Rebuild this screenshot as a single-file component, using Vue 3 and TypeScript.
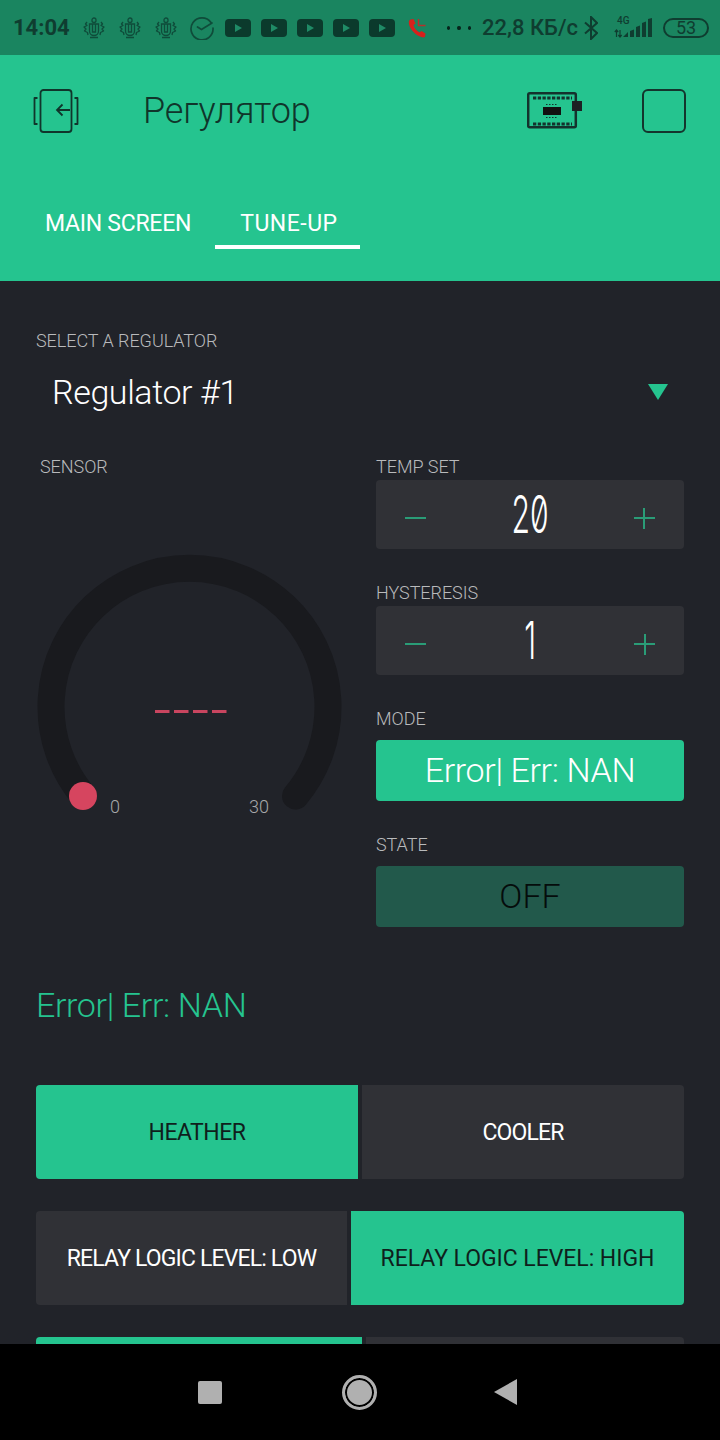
<script setup lang="ts">
const wreaths = [0, 1, 2];
const players = [0, 1, 2, 3, 4];
const steppers = [
  { label: "TEMP SET", value: "20" },
  { label: "HYSTERESIS", value: "1" },
];
const segments = [
  { left: "HEATHER", right: "COOLER", leftOn: true, leftWidth: 322, wide: false },
  { left: "RELAY LOGIC LEVEL: LOW", right: "RELAY LOGIC LEVEL: HIGH", leftOn: false, leftWidth: 311, wide: true },
];
</script>

<template>
  <div class="phone">
    <div class="statusbar">
      <span class="clock">14:04</span>
      <svg v-for="w in wreaths" :key="w" class="wreath" viewBox="0 0 24 24" fill="none" stroke="#0f4c3a" stroke-width="1.300">
        <rect x="10" y="2" width="4" height="4.500" rx="2" />
        <path d="M7.500 8h9v7a4.500 4.500 0 0 1-9 0z" />
        <path d="M10.500 8v8h3V8" />
        <path d="M5 6L3.500 8 5 9.500 2 11l2 2-1.500 2 3 1.500L6 19M19 6l1.500 2L19 9.500l3 1.500-2 2 1.500 2-3 1.500L18 19M8 21.500h8" stroke-linejoin="round" />
      </svg>
      <svg class="sber" viewBox="0 0 24 24" fill="none" stroke="#0f4c3a" stroke-width="1.700">
        <path d="M21 6.500A11 11 0 1 0 23 12" stroke-linecap="round" />
        <path d="M7.500 11l4 2.500L22 7" stroke-linecap="round" />
      </svg>
      <svg v-for="p in players" :key="p" class="player" viewBox="0 0 26 18">
        <rect width="26" height="18" rx="4" fill="#0b3a2c" />
        <path d="M10 5l7 4-7 4z" fill="#1f8b66" />
      </svg>
      <svg class="missed" viewBox="0 0 20 20">
        <path d="M2.500 1.500l3-.5 2 4.500-2 1.500c.6 3 3 6 6 7.500l2-1.500 4 2.500-.5 3c-.3 1-1.500 1-3 .8C7 17.500 1 10 .8 4.500c0-1.500.6-2.600 1.700-3z" fill="#d8201c" />
        <path d="M10.500 1v6.500h7" fill="none" stroke="#b8302a" stroke-width="1.500" />
      </svg>
      <span class="dots"><i></i><i></i><i></i></span>
      <span class="speed">22,8 КБ/с</span>
      <svg class="bt" viewBox="0 0 14 24" fill="none" stroke="#0f3d30" stroke-width="2">
        <path d="M1 6.500l12 10.500-6 6V1l6 6L1 17.500" />
      </svg>
      <svg class="signal" viewBox="0 0 38 24">
        <text x="3" y="8" font-size="10" font-family="Roboto, sans-serif" fill="#0f3d30">4G</text>
        <path d="M2.500 21v-7M.8 16l1.700-2 1.700 2M6 14v7M4.300 19L6 21l1.700-2" fill="none" stroke="#0f3d30" stroke-width="1.200" />
        <path d="M9 21l5-5v5zM16 15l4-1.500V21h-4zM22 11l4-1.500V21h-4zM28 7l4-1.500V21h-4zM34 3l4-1v19h-4z" fill="#0f3d30" />
      </svg>
      <span class="battery">53</span>
    </div>

    <header class="appbar">
      <div class="toolbar">
        <svg class="back" viewBox="0 0 46 44" fill="none" stroke="#10352b" stroke-width="1.800">
          <rect x="7.500" y="1" width="31" height="42" rx="3" />
          <path d="M4.500 9H1.500v26h3M41.500 9h3v26h-3" stroke-linejoin="round" />
          <path d="M37 21H24M29.500 15.500L24 21l5.500 5.500" />
        </svg>
        <h1 class="title">Регулятор</h1>
        <svg class="board" viewBox="0 0 56 42">
          <rect x="1.200" y="3.200" width="47.600" height="34" rx="1.500" fill="none" stroke="#14322d" stroke-width="2.500" />
          <path d="M6 8h39M6 34h39" stroke="#14322d" stroke-width="3" stroke-dasharray="3.300 1.450" fill="none" />
          <rect x="16" y="17" width="18" height="8" fill="#111" />
          <path d="M19 14.500h12M19 27.500h12" stroke="#14322d" stroke-width="1" stroke-dasharray="1.500 1.500" />
          <rect x="45" y="11" width="10" height="10" fill="#1d2024" />
        </svg>
        <span class="square"></span>
      </div>
      <nav class="tabs">
        <span class="tab">MAIN SCREEN</span>
        <span class="tab active">TUNE-UP</span>
      </nav>
    </header>

    <main class="content">
      <div class="label">SELECT A REGULATOR</div>
      <div class="select">
        <span>Regulator #1</span>
        <i class="caret"></i>
      </div>

      <div class="columns">
        <div class="sensor">
          <div class="label sensor-label">SENSOR</div>
          <div class="gauge">
            <svg width="340" height="400" viewBox="36 457 340 400">
              <path d="M83.500 796A138.500 138.500 0 1 1 295.500 796" fill="none" stroke="#191a1e" stroke-width="27" stroke-linecap="round" />
              <circle cx="83" cy="796" r="14" fill="#d6455f" />
              <path d="M155 711.500h72" stroke="#c9455f" stroke-width="3" stroke-dasharray="14.500 4.500" />
            </svg>
            <span class="tick tick-min">0</span>
            <span class="tick tick-max">30</span>
          </div>
        </div>

        <div class="controls">
          <div v-for="s in steppers" :key="s.label" class="field">
            <div class="label">{{ s.label }}</div>
            <div class="stepper">
              <i class="minus"></i>
              <span class="value">{{ s.value }}</span>
              <i class="plus"></i>
            </div>
          </div>
          <div class="field">
            <div class="label label-btn">MODE</div>
            <div class="button on">Error| Err: NAN</div>
          </div>
          <div class="field">
            <div class="label label-btn">STATE</div>
            <div class="button off">OFF</div>
          </div>
        </div>
      </div>

      <div class="message">Error| Err: NAN</div>

      <div v-for="seg in segments" :key="seg.left" class="segment">
        <div class="seg" :class="{ on: seg.leftOn }" :style="{ width: seg.leftWidth + 'px' }">{{ seg.left }}</div>
        <div class="seg grow" :class="{ on: !seg.leftOn, wide: seg.wide }">{{ seg.right }}</div>
      </div>
      <div class="segment">
        <div class="seg on" :style="{ width: '326px' }"></div>
        <div class="seg grow"></div>
      </div>
    </main>

    <footer class="navbar">
      <i class="nav-square"></i>
      <i class="nav-circle"></i>
      <i class="nav-back"></i>
    </footer>
  </div>
</template>

<style>
html,
body {
  margin: 0;
  background: #000;
}
</style>

<style scoped>
.phone {
  width: 720px;
  height: 1440px;
  display: flex;
  flex-direction: column;
  overflow: hidden;
  font-family: Roboto, "Noto Sans", sans-serif;
  font-weight: 300;
}

.statusbar {
  height: 55px;
  flex: none;
  display: flex;
  align-items: center;
  padding: 0 0 0 13px;
  background: #1a8560;
  color: #0f3d30;
  font-weight: 500;
}

.clock {
  width: 57px;
  margin-right: 12px;
  font-size: 22px;
  font-weight: 700;
}

.wreath {
  width: 24px;
  height: 24px;
  margin-right: 12px;
}

.sber {
  width: 24px;
  height: 24px;
  margin-right: 11px;
}

.player {
  width: 26px;
  height: 18px;
  margin-right: 10px;
}

.missed {
  width: 20px;
  height: 20px;
  margin-left: 3px;
  margin-right: 19px;
}

.dots {
  display: flex;
  gap: 7px;
  width: 24px;
  margin-right: 11px;
}

.dots i {
  width: 4px;
  height: 4px;
  border-radius: 50%;
  background: #06241b;
}

.speed {
  width: 96px;
  margin-right: 6px;
  font-size: 22px;
  white-space: nowrap;
}

.bt {
  width: 14px;
  height: 24px;
  margin-right: 16px;
}

.signal {
  width: 38px;
  height: 24px;
  margin-right: 11px;
}

.battery {
  box-sizing: border-box;
  width: 46px;
  height: 20px;
  border: 2px solid #0f3d30;
  border-radius: 10px;
  font-size: 18px;
  font-weight: 400;
  line-height: 16px;
  text-align: center;
}

.appbar {
  height: 226px;
  flex: none;
  background: #25c48f;
  display: flex;
  flex-direction: column;
}

.toolbar {
  display: flex;
  align-items: center;
  height: 44px;
  margin-top: 34px;
  padding-left: 33px;
}

.back {
  width: 46px;
  height: 44px;
}

.title {
  margin: 0 0 0 64px;
  width: 217px;
  font-size: 36px;
  font-weight: 300;
  color: #10352b;
  letter-spacing: -0.1px;
}

.board {
  width: 56px;
  height: 42px;
  margin-left: 167px;
}

.square {
  box-sizing: border-box;
  width: 44px;
  height: 44px;
  margin-left: 59px;
  border: 2.500px solid #14352d;
  border-radius: 6px;
}

.tabs {
  display: flex;
  margin-top: 74px;
  padding-left: 21px;
}

.tab {
  box-sizing: border-box;
  height: 42px;
  padding: 0 24px;
  color: #fff;
  font-size: 23px;
  font-weight: 400;
  line-height: 33px;
  letter-spacing: -0.26px;
}

.tab.active {
  width: 145px;
  padding: 0 0 0 25px;
  letter-spacing: 0.5px;
  border-bottom: 4px solid #fff;
  white-space: nowrap;
}

.content {
  flex: 1;
  min-height: 0;
  overflow: hidden;
  box-sizing: border-box;
  padding: 50px 36px 0;
  background: #212329;
}

.label {
  height: 20px;
  font-size: 18px;
  line-height: 20px;
  color: #b9babc;
  letter-spacing: -0.05px;
  white-space: nowrap;
}

.select {
  display: flex;
  align-items: center;
  justify-content: space-between;
  height: 82px;
  padding: 0 16px;
  color: #fff;
  font-size: 34px;
  letter-spacing: -0.4px;
}

.caret {
  width: 0;
  height: 0;
  border-left: 10px solid transparent;
  border-right: 10px solid transparent;
  border-top: 16px solid #25c48f;
}

.columns {
  display: flex;
  margin-top: 24px;
}

.sensor {
  width: 340px;
  flex: none;
}

.sensor-label {
  padding-left: 4px;
}

.gauge {
  position: relative;
  margin-top: -20px;
  height: 400px;
}

.gauge svg {
  display: block;
}

.tick {
  position: absolute;
  top: 339px;
  font-size: 18px;
  line-height: 22px;
  color: #a7a8aa;
}

.tick-min {
  left: 74px;
}

.tick-max {
  left: 213px;
}

.controls {
  width: 308px;
  display: flex;
  flex-direction: column;
  gap: 34px;
}

.field .label {
  margin-bottom: 3px;
}

.field .label-btn {
  margin-bottom: 11px;
}

.stepper {
  display: flex;
  align-items: center;
  justify-content: space-between;
  height: 69px;
  padding: 0 29px;
  background: #303136;
  border-radius: 4px;
  box-sizing: border-box;
}

.minus,
.plus {
  position: relative;
  width: 21px;
  height: 21px;
  margin-top: 8px;
}

.minus::before,
.plus::before {
  content: "";
  position: absolute;
  left: 0;
  top: 9px;
  width: 21px;
  height: 2px;
  background: #2a9c77;
}

.plus::after {
  content: "";
  position: absolute;
  left: 9.500px;
  top: 0;
  width: 2px;
  height: 21px;
  background: #2a9c77;
}

.value {
  color: #fff;
  font-family: Inter, Roboto, sans-serif;
  font-feature-settings: "zero" 1;
  font-weight: 300;
  font-size: 52px;
  line-height: 69px;
  transform: scaleX(0.58);
}

.button {
  height: 61px;
  border-radius: 4px;
  text-align: center;
  font-size: 34px;
  line-height: 60px;
  white-space: nowrap;
}

.button.on {
  background: #25c48f;
  color: #fff;
  letter-spacing: -0.35px;
}

.button.off {
  background: #22594b;
  color: #050c0b;
}

.message {
  margin-top: 56px;
  height: 44px;
  font-size: 34px;
  line-height: 44px;
  color: #25c48f;
  letter-spacing: -0.35px;
}

.segment {
  display: flex;
  gap: 4px;
  height: 94px;
  margin-bottom: 32px;
  border-radius: 4px;
  overflow: hidden;
}

.message + .segment {
  margin-top: 58px;
}

.seg {
  display: flex;
  align-items: center;
  justify-content: center;
  background: #303136;
  color: #fff;
  font-size: 23px;
  font-weight: 400;
  letter-spacing: -0.85px;
  white-space: nowrap;
}

.seg.on {
  background: #25c48f;
  color: #0f1f1c;
  letter-spacing: -0.5px;
}

.seg.wide {
  letter-spacing: -0.05px;
}

.seg.grow {
  flex: 1;
}

.navbar {
  height: 96px;
  flex: none;
  background: #000;
  display: flex;
  align-items: center;
}

.nav-square {
  width: 24px;
  height: 23px;
  margin-left: 198px;
  border-radius: 2px;
  background: #b0b0b0;
}

.nav-circle {
  box-sizing: border-box;
  width: 35px;
  height: 35px;
  margin-left: 120px;
  border-radius: 50%;
  border: 3px solid #b0b0b0;
  background: #b0b0b0;
  box-shadow: inset 0 0 0 2px #000;
}

.nav-back {
  width: 0;
  height: 0;
  margin-left: 117px;
  border-top: 13px solid transparent;
  border-bottom: 13px solid transparent;
  border-right: 23px solid #b0b0b0;
}
</style>
